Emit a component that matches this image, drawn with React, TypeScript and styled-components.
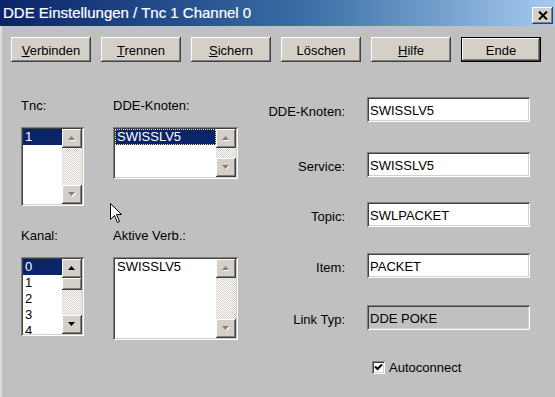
import React from "react";
import styled, { createGlobalStyle, css } from "styled-components";

const GlobalStyle = createGlobalStyle`
  html, body {
    margin: 0;
    padding: 0;
    background: #c0c0c0;
  }
  body {
    font-family: "Liberation Sans", Arial, sans-serif;
    font-size: 13px;
    color: #000;
  }
`;

const raised = css`
  box-shadow: inset -1px -1px #404040, inset 1px 1px #ffffff,
    inset -2px -2px #808080, inset 2px 2px #d4d0c8;
`;

const sunken = css`
  box-shadow: inset 1px 1px #808080, inset -1px -1px #ffffff,
    inset 2px 2px #404040, inset -2px -2px #d4d0c8;
`;

const Window = styled.div`
  position: relative;
  width: 555px;
  height: 397px;
  overflow: hidden;
  background: #c0c0c0;
`;

const TitleBar = styled.div`
  height: 26px;
  display: flex;
  align-items: center;
  padding: 0 2px 0 3px;
  background: linear-gradient(to right, #0a246a 0%, #3a6ea5 55%, #a6caf0 100%);
`;

const Title = styled.div`
  flex: 1;
  color: #fff;
  font-size: 15px;
  line-height: 18px;
  white-space: nowrap;
  -webkit-text-stroke: 0.2px #fff;
`;

const CloseButton = styled.div`
  align-self: flex-start;
  margin-top: 7px;
  width: 21px;
  height: 17px;
  display: flex;
  align-items: center;
  justify-content: center;
  background: #d4d0c8;
  ${raised};
`;

const Content = styled.div`
  box-shadow: inset 2px 0 #dcdcdc;
  height: 371px;
`;

const Toolbar = styled.div`
  display: flex;
  gap: 10px;
  padding: 11px 0 0 11px;
`;

const Button = styled.div<{ $default?: boolean }>`
  box-sizing: border-box;
  width: 80px;
  height: 25px;
  padding-top: 2px;
  display: flex;
  align-items: center;
  justify-content: center;
  background: #d4d0c8;
  line-height: 15px;
  ${raised};
  ${(p) =>
    p.$default &&
    css`
      border: 1px solid #000;
    `}
`;

const Body = styled.div`
  display: flex;
  align-items: flex-start;
`;

const LeftPanel = styled.div`
  display: grid;
  grid-template-columns: 63px 125px;
  column-gap: 29px;
  align-items: start;
  align-content: start;
  padding: 36px 0 0 21px;
`;

const Label = styled.div<{ $top?: number }>`
  line-height: 15px;
  margin-top: ${(p) => p.$top ?? 0}px;
  margin-bottom: 14px;
`;

const ListBox = styled.div<{ $h: number }>`
  box-sizing: border-box;
  height: ${(p) => p.$h}px;
  padding: 2px;
  display: flex;
  background: #fff;
  ${sunken};
`;

const Items = styled.div`
  flex: 1;
  overflow: hidden;
`;

const Item = styled.div<{ $selected?: boolean; $focus?: boolean }>`
  box-sizing: border-box;
  height: 16px;
  line-height: 16px;
  padding-left: 2px;
  white-space: nowrap;
  ${(p) =>
    p.$selected &&
    css`
      background: #0a246a;
      color: #fff;
    `}
  ${(p) =>
    p.$focus &&
    css`
      outline: 1px dotted #f0e890;
      outline-offset: -1px;
    `}
`;

const ScrollBar = styled.div`
  width: 20px;
  display: flex;
  flex-direction: column;
  background: repeating-conic-gradient(#d4d0c8 0 25%, #ffffff 0 50%) 0 0 / 2px
    2px;
`;

const ScrollButton = styled.div`
  height: 19px;
  flex: none;
  display: flex;
  align-items: center;
  justify-content: center;
  background: #d4d0c8;
  ${raised};
`;

const Thumb = styled.div`
  height: 12px;
  flex: none;
  background: #d4d0c8;
  ${raised};
`;

const Track = styled.div`
  flex: 1;
`;

const RightPanel = styled.div`
  margin-left: 7px;
  display: flex;
  flex-direction: column;
`;

const FieldRow = styled.div<{ $gap: number }>`
  display: grid;
  grid-template-columns: 100px 163px;
  column-gap: 22px;
  align-items: center;
  margin-top: ${(p) => p.$gap}px;
`;

const FieldLabel = styled.div`
  text-align: right;
  line-height: 15px;
  padding-top: 3px;
`;

const TextBox = styled.div<{ $disabled?: boolean }>`
  box-sizing: border-box;
  height: 25px;
  padding: 1px 3px 0;
  display: flex;
  align-items: center;
  line-height: 15px;
  background: ${(p) => (p.$disabled ? "#c0c0c0" : "#fff")};
  ${sunken};
`;

const CheckRow = styled.div`
  display: flex;
  align-items: center;
  gap: 4px;
  margin: 30px 0 0 127px;
  line-height: 15px;
`;

const CheckBox = styled.div`
  width: 13px;
  height: 13px;
  background: #fff;
  ${sunken};
`;

const Cursor = styled.svg`
  position: absolute;
  left: 110px;
  top: 203px;
`;

const Arrow = ({ dir, enabled }: { dir: "up" | "down"; enabled?: boolean }) => {
  const pts = dir === "up" ? "3.5,0 7,4 0,4" : "0,0 7,0 3.5,4";
  return (
    <svg width="9" height="6" viewBox="0 0 9 6">
      {!enabled && (
        <polygon points={pts} fill="#fff" transform="translate(1 1)" />
      )}
      <polygon points={pts} fill={enabled ? "#000" : "#808080"} />
    </svg>
  );
};

const Scroll = ({ enabled, thumb }: { enabled?: boolean; thumb?: boolean }) => (
  <ScrollBar>
    <ScrollButton>
      <Arrow dir="up" enabled={enabled} />
    </ScrollButton>
    {thumb && <Thumb />}
    <Track />
    <ScrollButton>
      <Arrow dir="down" enabled={enabled} />
    </ScrollButton>
  </ScrollBar>
);

const buttons = [
  { text: "Verbinden", mnemonic: true },
  { text: "Trennen", mnemonic: true },
  { text: "Sichern", mnemonic: true },
  { text: "Löschen", mnemonic: false },
  { text: "Hilfe", mnemonic: true },
  { text: "Ende", mnemonic: false, isDefault: true },
];

const fields = [
  { label: "DDE-Knoten:", value: "SWISSLV5", gap: 35 },
  { label: "Service:", value: "SWISSLV5", gap: 30 },
  { label: "Topic:", value: "SWLPACKET", gap: 25 },
  { label: "Item:", value: "PACKET", gap: 26 },
  { label: "Link Typ:", value: "DDE POKE", gap: 27, disabled: true },
];

export default function App() {
  return (
    <>
      <GlobalStyle />
      <Window>
        <TitleBar>
          <Title>DDE Einstellungen / Tnc 1 Channel 0</Title>
          <CloseButton>
            <svg width="10" height="9" viewBox="0 0 10 9">
              <path d="M1 0.5 L9 8.5 M9 0.5 L1 8.5" stroke="#000" strokeWidth="2" />
            </svg>
          </CloseButton>
        </TitleBar>
        <Content>
          <Toolbar>
            {buttons.map((b) => (
              <Button key={b.text} $default={b.isDefault}>
                {b.mnemonic ? (
                  <span>
                    <u>{b.text[0]}</u>
                    {b.text.slice(1)}
                  </span>
                ) : (
                  b.text
                )}
              </Button>
            ))}
          </Toolbar>
          <Body>
            <LeftPanel>
              <Label>Tnc:</Label>
              <Label>DDE-Knoten:</Label>
              <ListBox $h={79}>
                <Items>
                  <Item $selected>1</Item>
                </Items>
                <Scroll />
              </ListBox>
              <ListBox $h={52}>
                <Items>
                  <Item $selected $focus>
                    SWISSLV5
                  </Item>
                </Items>
                <Scroll />
              </ListBox>
              <Label $top={22}>Kanal:</Label>
              <Label $top={22}>Aktive Verb.:</Label>
              <ListBox $h={79}>
                <Items>
                  <Item $selected>0</Item>
                  <Item>1</Item>
                  <Item>2</Item>
                  <Item>3</Item>
                  <Item>4</Item>
                </Items>
                <Scroll enabled thumb />
              </ListBox>
              <ListBox $h={83}>
                <Items>
                  <Item>SWISSLV5</Item>
                </Items>
                <Scroll />
              </ListBox>
            </LeftPanel>
            <RightPanel>
              {fields.map((f) => (
                <FieldRow key={f.label} $gap={f.gap}>
                  <FieldLabel>{f.label}</FieldLabel>
                  <TextBox $disabled={f.disabled}>{f.value}</TextBox>
                </FieldRow>
              ))}
              <CheckRow>
                <CheckBox>
                  <svg width="13" height="13" viewBox="0 0 13 13">
                    <path
                      d="M3 5.5 L5.5 8 L10 3.5"
                      stroke="#000"
                      strokeWidth="2"
                      fill="none"
                    />
                  </svg>
                </CheckBox>
                Autoconnect
              </CheckRow>
            </RightPanel>
          </Body>
        </Content>
        <Cursor width="13" height="21" viewBox="0 0 13 21">
          <path
            d="M0.5 0.5 L0.5 16.5 L4.5 12.5 L7.5 19.5 L9.5 18.5 L6.5 11.5 L11.5 11.5 Z"
            fill="#fff"
            stroke="#000"
            strokeWidth="1"
          />
        </Cursor>
      </Window>
    </>
  );
}
